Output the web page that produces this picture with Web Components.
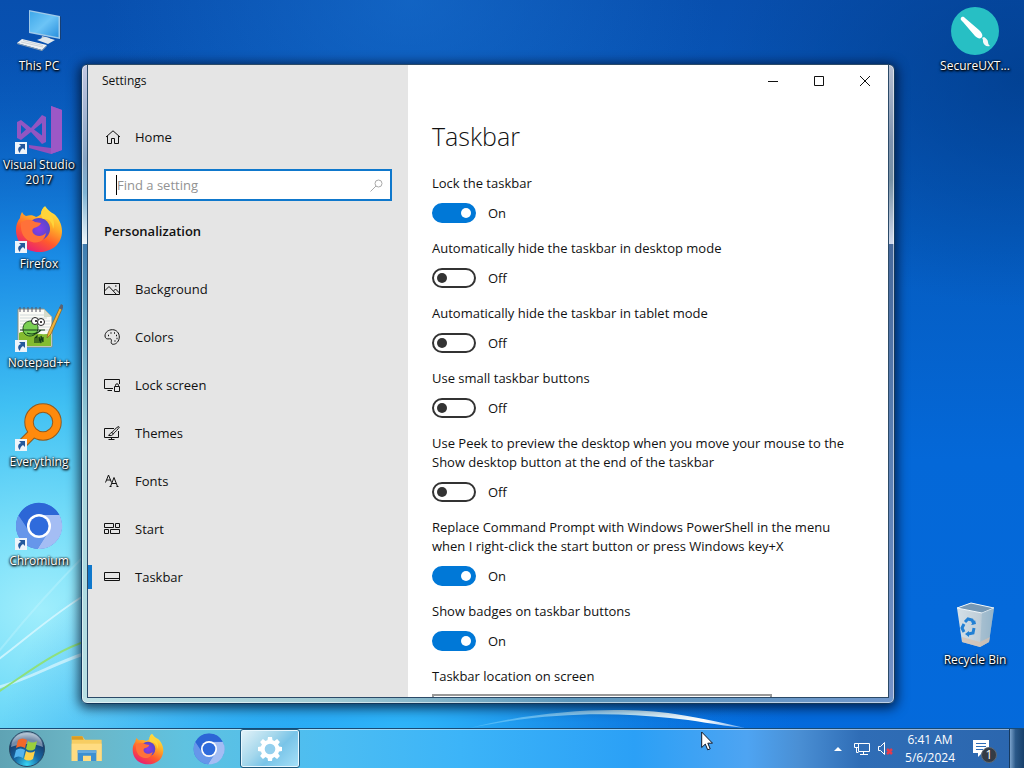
<!DOCTYPE html>
<html lang="en">
<head>
<meta charset="utf-8">
<meta name="viewport" content="width=device-width, initial-scale=1">
<title>Settings</title>
<style>
    html, body {
        height: 100%;
        margin: 0;
        overflow: hidden;
        font-family: "Open Sans", "Noto Sans", sans-serif;
        font-size: 13px;
        color: #111;
    }
</style>
</head>
<body>

<desktop-screen>
    <desktop-icon slot="left" icon="pc">This PC</desktop-icon>
    <desktop-icon slot="left" icon="vs" shortcut>Visual Studio 2017</desktop-icon>
    <desktop-icon slot="left" icon="firefox" shortcut>Firefox</desktop-icon>
    <desktop-icon slot="left" icon="notepad" shortcut>Notepad++</desktop-icon>
    <desktop-icon slot="left" icon="everything" shortcut>Everything</desktop-icon>
    <desktop-icon slot="left" icon="chromium" shortcut>Chromium</desktop-icon>

    <desktop-icon slot="right" icon="secure">SecureUXT...</desktop-icon>
    <desktop-icon slot="right" icon="bin" style="grid-row: 7">Recycle Bin</desktop-icon>

    <app-window heading="Settings">
        <settings-nav slot="side">
            <nav-item slot="home" icon="home">Home</nav-item>
            <nav-item icon="picture">Background</nav-item>
            <nav-item icon="palette">Colors</nav-item>
            <nav-item icon="lock">Lock screen</nav-item>
            <nav-item icon="themes">Themes</nav-item>
            <nav-item icon="fonts">Fonts</nav-item>
            <nav-item icon="start">Start</nav-item>
            <nav-item icon="taskbar" active>Taskbar</nav-item>
        </settings-nav>
        <settings-page heading="Taskbar">
            <toggle-setting label="Lock the taskbar" on></toggle-setting>
            <toggle-setting label="Automatically hide the taskbar in desktop mode"></toggle-setting>
            <toggle-setting label="Automatically hide the taskbar in tablet mode"></toggle-setting>
            <toggle-setting label="Use small taskbar buttons"></toggle-setting>
            <toggle-setting label="Use Peek to preview the desktop when you move your mouse to the Show desktop button at the end of the taskbar"></toggle-setting>
            <toggle-setting label="Replace Command Prompt with Windows PowerShell in the menu when I right-click the start button or press Windows key+X" on></toggle-setting>
            <toggle-setting label="Show badges on taskbar buttons" on></toggle-setting>
            <select-setting label="Taskbar location on screen"></select-setting>
        </settings-page>
    </app-window>

    <task-bar slot="bar">
        <task-button icon="explorer" name="File Explorer"></task-button>
        <task-button icon="firefox" name="Firefox"></task-button>
        <task-button icon="chromium" name="Chromium"></task-button>
        <task-button icon="gear" name="Settings" active></task-button>
    </task-bar>
</desktop-screen>

<script>
(function(){

// coloured icons are 48x48, line icons are 16x16
var icons = {
    pc: `<svg viewBox="0 0 48 48">
        <defs><linearGradient id="s" x1="0" y1="0" x2="1" y2="1"><stop offset="0" stop-color="#3fa8ea"/><stop offset=".5" stop-color="#6cc4f6"/><stop offset="1" stop-color="#2a90de"/></linearGradient></defs>
        <path d="M14 3l31 6v23l-31-6z" fill="#9fc9e8"/><path d="M45 9l1 1v22l-1 1z" fill="#173f74"/>
        <path d="M15 4.500l28.500 5.600v20.200L15 24.800z" fill="url(#s)"/>
        <path d="M27 29l8 2-1 4-8-2z" fill="#b8c6d2"/><path d="M22 33l8-3 10 3-7 4z" fill="#dfe7ec"/>
        <path d="M2 36l5-4 25 6-5 5z" fill="#eef1f3"/><path d="M2 36l25 7v1L2 37zM27 43l5-5v1l-5 5z" fill="#8da0b0"/>
        <path d="M6 35l22 5M8 33.500l20 5" stroke="#b5c0c8" fill="none" stroke-width=".6"/></svg>`,
    vs: `<svg viewBox="0 0 48 48"><path d="M36 0l11 4v40l-11 4-22-6v-3l22 3z" fill="#9250bc"/><path d="M36 0l11 4v40l-11 4z" fill="#9c58c6"/>
        <path fill-rule="evenodd" d="M2 16l4-2 10 8L27 9l4 2v25l-4 2-11-12-10 8-4-2zM6 19v9l5-4.500zM19 23.500l8 6V17z" fill="#9256c2"/></svg>`,
    firefox: `<svg viewBox="0 0 48 48">
        <defs><linearGradient id="f" x1=".8" y1="0" x2=".25" y2="1"><stop offset="0" stop-color="#fff04a"/><stop offset=".35" stop-color="#ffae28"/><stop offset=".65" stop-color="#ff5a2d"/><stop offset="1" stop-color="#e6187c"/></linearGradient>
        <radialGradient id="p"><stop offset="0" stop-color="#8b3bea"/><stop offset="1" stop-color="#5747c8"/></radialGradient></defs>
        <path d="M30 1c3 4 5 6 9 8 4 3 8 10 8 17 0 13-10 21-23 21S1 38 1 25c0-5 1-8 4-12 0-2 1-4 2-6 1 2 2 3 4 4 4-1 7-1 10 1 3-1 4-2 5-3 0-3 2-6 4-8z" fill="url(#f)"/>
        <circle cx="24" cy="24" r="11" fill="url(#p)"/>
        <path d="M6 18c4-4 10-4 14-1l6 1c-1 3-4 4-7 5-2 1-2 3-1 5 3 4 9 4 13 0-1 7-7 11-14 9C9 35 5 27 6 18z" fill="#ff7139"/>
        <path d="M28 14c6-1 10 4 10 10 2-5 1-11-3-15-4-2-6-5-6-7-3 3-4 8-1 12z" fill="#ffd43a"/></svg>`,
    notepad: `<svg viewBox="0 0 48 48">
        <path d="M3 5h26l8 8v30H3z" fill="#fbfbf6" stroke="#8a8f80"/><path d="M5 11h24M5 14h27M5 17h30M5 20h30M5 23h30M5 26h30" stroke="#b5c4ca" stroke-width=".6"/>
        <path d="M29 5v8h8z" fill="#d6dccc"/><path d="M5 3v5M9 3v5M13 3v5M17 3v5M21 3v5M25 3v5" stroke="#556" stroke-width="1"/>
        <path d="M4 29c8-4 20 4 32 0v13H4z" fill="#84bc30"/><path d="M8 25c0-5 3-8 8-8 4 0 7 3 7 7 0 5-4 8-8 8-4 0-7-3-7-7z" fill="#79cf52" stroke="#1c4a18"/>
        <circle cx="20" cy="17" r="3.500" fill="#fff" stroke="#222"/><circle cx="26" cy="18" r="3.500" fill="#fff" stroke="#222"/><circle cx="21" cy="17" r="1"/><circle cx="26" cy="18" r="1"/>
        <path d="M5 26h6M10 26h20M12 29q8 3 14-3M20 39v-5l2-2v7M24 39v-6l2 6v-7l2 6v-5" stroke="#163e16" fill="none" stroke-width="1.200"/>
        <path d="M33 29L45 3l2 2-11 25-4 4z" fill="#f0b23c" stroke="#86601c" stroke-width=".7"/><path d="M44 4l2-4 3 2-2 4z" fill="#5a6272"/></svg>`,
    everything: `<svg viewBox="0 0 48 48"><path d="M20 28L7 41" stroke="#8f5a20" stroke-width="10"/><circle cx="28" cy="19" r="14" fill="none" stroke="#8f5a20" stroke-width="9.500"/>
        <path d="M20 28L7 41" stroke="#ff8a0c" stroke-width="8"/><circle cx="28" cy="19" r="14" fill="none" stroke="#ff8a0c" stroke-width="7.500"/></svg>`,
    chromium: `<svg viewBox="0 0 48 48"><circle cx="24" cy="24" r="23" fill="#3b75de"/>
        <path d="M24 13h20.500a23 23 0 0 1-22 34l11-18z" fill="#a4bdf4"/><path d="M4 12.500a23 23 0 0 0 18.500 34.400L31 34l-17-4z" fill="#6696ea"/>
        <path d="M3.500 13.500A23 23 0 0 1 44.500 13H24l-9 17z" fill="#2c66d6"/><circle cx="24" cy="24" r="12" fill="#fff"/><circle cx="24" cy="24" r="9.500" fill="#2f6bdc"/></svg>`,
    secure: `<svg viewBox="0 0 48 48"><circle cx="24" cy="24" r="24" fill="#27bfc4"/>
        <path d="M10 11c1-2 3-1 4 0l14 12c3 3 4 5 3 7s-4 2-7-1L12 15c-2-2-3-3-2-4z" fill="#fff"/><path d="M31 31l2-1c2 1 4 3 4 5 0 2 1 3 2 4-4 1-6-1-7-4 0-2 0-3-1-4z" fill="#f3f8f8"/></svg>`,
    bin: `<svg viewBox="0 0 48 48">
        <defs><linearGradient id="b"><stop offset="0" stop-color="#d4e0e8"/><stop offset=".6" stop-color="#c0ced8"/><stop offset="1" stop-color="#8fb0c8"/></linearGradient></defs>
        <path d="M6 7l14-5 23 5-5 34-9 5-18-5z" fill="url(#b)"/><path d="M6 7l14-5 23 5-12 5z" fill="#7698b4" stroke="#eef5f9"/>
        <path d="M31 12l12-5-5 34-9 5z" fill="#9ab8cc" opacity=".6"/><path d="M11 36l18 5 10-5-1 5-9 5-18-5z" fill="#d9c0ae" opacity=".7"/>
        <path d="M14 21l3-3 4 1 2 4M23 27l-1 5-5 1M13 31l-2-4 2-4" fill="none" stroke="#2280d4" stroke-width="3"/><path d="M20 24l5-1-1-4zM18 36v-6l-4 3z" fill="#2280d4"/></svg>`,
    explorer: `<svg viewBox="0 0 48 48"><path d="M1 5h16l4 5h25v32H1z" fill="#f7cd62"/><path d="M1 5h16l2 5H1z" fill="#dc9c22"/><path d="M1 16h45v26H1z" fill="#ffdc82"/>
        <path d="M10 26h28v16h-8v-8H18v8h-8z" fill="#3c8fd2"/><path d="M10 26h28v4H10z" fill="#66abe0"/></svg>`,
    gear: `<svg viewBox="0 0 48 48"><g fill="#fff"><circle cx="24" cy="24" r="14"/>
        <path d="M21 6h6l1 6h-8zM21 42h6l1-6h-8z"/><path d="M6 21v6l6 1v-8zM42 21v6l-6 1v-8z"/>
        <g transform="rotate(45 24 24)"><path d="M21 6h6l1 6h-8zM21 42h6l1-6h-8z"/><path d="M6 21v6l6 1v-8zM42 21v6l-6 1v-8z"/></g></g>
        <circle cx="24" cy="24" r="8" fill="#94d0ee"/></svg>`,
    home: `<svg viewBox="0 0 16 16"><path d="M2 8L9 1.800 16 8M3.500 7v7.500h4v-5h3v5h4V7"/></svg>`,
    search: `<svg viewBox="0 0 16 16"><circle cx="9.500" cy="6.500" r="3.500"/><path d="M7 9l-5.500 5.500"/></svg>`,
    picture: `<svg viewBox="0 0 16 16"><path d="M.5 2.500h15v11H.5zM.5 10L5 5.500l7.500 8M9.500 10l2-2 4 4"/><path d="M11 5h1.500" /></svg>`,
    palette: `<svg viewBox="0 0 16 16"><path d="M1 7C1 3 4.500.7 8.500.7 12.500.7 15.300 4 15.300 8s-3 7.300-6 7.300c-2 0-2.300-1.300-2-2.800.4-2-.3-3-1.800-2.700C3 10.300 1 9.500 1 7z"/>
        <path d="M4 6.500h1M6.500 4h1M10 4h1M12 6.500h1M12.500 9.500h1M10.500 12h1" stroke-width="1.500"/></svg>`,
    lock: `<svg viewBox="0 0 16 16"><path d="M9 11.500H.5v-9h15V7M3.500 13.500H8"/><path d="M10.500 9.500h5v5h-5zM11.500 9.500V8.300a1.500 1.500 0 0 1 3 0v1.200"/></svg>`,
    themes: `<svg viewBox="0 0 16 16"><path d="M10 3.500H.5v9h14V6M4.500 14.500h6M7.500 12.500v2"/><path d="M14.500 1.500c-2 1-5 4-6.500 6l1.300 1.300c2-1.800 5-5 6-6.700zM8 7.500c-2 0-1.500 2-3.500 2.800 2 .8 4.500 0 4.800-1.500z"/></svg>`,
    fonts: `<svg viewBox="0 0 16 16"><path d="M1.500 9.500L4.500 2l3 7.500M2.500 7h4M6.500 13.500l3.500-9 3.500 9M7.800 10.500h4.500M5.500 13.500h2M12.500 13.500h2"/></svg>`,
    start: `<svg viewBox="0 0 16 16"><path d="M.5 2.500h9v4h-9zM11.500 2.500h4v4h-4zM.5 8.500h4v4h-4zM6.500 8.500h9v4h-9z"/></svg>`,
    taskbar: `<svg viewBox="0 0 16 16"><path d="M.5 3.500h15v8H.5zM.5 9.500h15"/></svg>`,
    min: `<svg viewBox="0 0 16 16"><path d="M3 8.500h10"/></svg>`,
    max: `<svg viewBox="0 0 16 16"><path d="M3.500 3.500h9v9h-9z"/></svg>`,
    close: `<svg viewBox="0 0 16 16"><path d="M3 3l10 10M13 3L3 13"/></svg>`,
    caret: `<svg viewBox="0 0 16 16"><path d="M4 10l4-4 4 4z" fill="currentColor" stroke="none"/></svg>`,
    network: `<svg viewBox="0 0 16 16"><path d="M4.500 2.500h11v8h-11zM9.500 10.500v3M6 13.500h8"/><path d="M.5 2.500h4v4h-4zM2.500 6.500v5h2"/></svg>`,
    volume: `<svg viewBox="0 0 16 16"><path d="M.5 5.500h2l4-4v12l-4-4h-2z"/><path d="M9 8l5 5M14 8l-5 5" stroke="#e33b4d" stroke-width="2.500"/></svg>`
};

function mount(el, html) {
    el.attachShadow({mode: 'open'});
    el.shadowRoot.innerHTML = html;
}

class DesktopScreen extends HTMLElement {
    constructor() {
        super();
        mount(this, /*html*/`
<style>
    :host {
        display: grid;
        grid-template-rows: 1fr auto;
        height: 100%;
        position: relative;
        overflow: hidden;
        background: #0660c8;
    }

    .wallpaper {
        position: absolute;
        inset: 0;
        width: 100%;
        height: 100%;
    }

    main {
        display: grid;
        grid-template-columns: 78px 1fr 98px;
        position: relative;
        min-height: 0;
    }

    .icons {
        display: grid;
        grid-template-rows: repeat(7, 99px);
    }

    .icons.right {
        grid-column: 3;
    }

    /* the window floats over the desktop */
    .windows {
        position: absolute;
        inset: 64px 129px 24px 81px;
    }

    .pointer {
        position: absolute;
        left: 701px;
        top: 731px;
        width: 12px;
        height: 20px;
    }
</style>

<svg class="wallpaper" viewBox="0 0 1024 768" preserveAspectRatio="none" aria-hidden="true">
    <defs>
        <linearGradient id="base" x1="0" y1="0" x2="0" y2="1">
            <stop offset="0" stop-color="#084fae"/><stop offset=".3" stop-color="#055cc0"/><stop offset=".6" stop-color="#0468d8"/><stop offset="1" stop-color="#046adc"/>
        </linearGradient>
        <radialGradient id="glow" gradientUnits="userSpaceOnUse" cx="0" cy="0" r="1" gradientTransform="translate(40 610) scale(700 570)">
            <stop offset="0" stop-color="#a0eefc"/><stop offset=".15" stop-color="#78def9"/><stop offset=".36" stop-color="#40c0f3"/><stop offset=".62" stop-color="#1c90e8" stop-opacity=".9"/><stop offset="1" stop-color="#0a5cc0" stop-opacity="0"/>
        </radialGradient>
        <radialGradient id="mid" gradientUnits="userSpaceOnUse" cx="0" cy="0" r="1" gradientTransform="translate(400 740) scale(400 260)">
            <stop offset="0" stop-color="#30b8fa"/><stop offset="1" stop-color="#0a80ee" stop-opacity="0"/>
        </radialGradient>
        <radialGradient id="dark" cx="1" cy=".1" r=".3"><stop offset="0" stop-color="#003a86" stop-opacity=".7"/><stop offset="1" stop-color="#003a86" stop-opacity="0"/></radialGradient>
        <radialGradient id="top" cx=".4" cy="0" r=".3"><stop offset="0" stop-color="#1c78d8" stop-opacity=".5"/><stop offset="1" stop-color="#1c78d8" stop-opacity="0"/></radialGradient>
        <linearGradient id="arc"><stop offset="0" stop-color="#8fdcff" stop-opacity=".3"/><stop offset=".6" stop-color="#c5ecff"/><stop offset=".85" stop-color="#fff"/><stop offset="1" stop-color="#fff" stop-opacity=".4"/></linearGradient>
    </defs>
    <rect width="1024" height="768" fill="url(#base)"/>
    <rect width="1024" height="768" fill="url(#glow)"/>
    <rect width="1024" height="768" fill="url(#mid)"/>
    <rect width="1024" height="768" fill="url(#dark)"/>
    <rect width="1024" height="768" fill="url(#top)"/>
    <path d="M470 728c70-18 150-22 205-14 30 5 50 9 70 14-30-3-50-8-75-10-60-6-120-6-200 10z" fill="url(#arc)"/>
    <g fill="none" stroke-linecap="round">
        <path d="M-5 662C25 640 55 612 90 592" stroke="#d9f8ff" stroke-width="2" opacity=".8"/>
        <path d="M-5 656C20 625 45 595 85 555" stroke="#c8f6ff" stroke-width="2" opacity=".35"/>
        <path d="M-5 688C30 680 55 662 90 652" stroke="#effcff" stroke-width="3" opacity=".6"/>
        <path d="M-5 694C25 675 55 650 90 640" stroke="#8ee07c" stroke-width="2"/>
    </g>
</svg>
<main>
    <div class="icons"><slot name="left"></slot></div>
    <div class="icons right"><slot name="right"></slot></div>
    <div class="windows"><slot></slot></div>
</main>
<slot name="bar"></slot>
<svg class="pointer" viewBox="0 0 12 20" aria-hidden="true"><path d="M.7 1v15.500l3.600-3.400 2.400 5.700 2.500-1-2.400-5.600h4.700z" fill="#fff" stroke="#101828"/></svg>
`);
    }
}

class DesktopIcon extends HTMLElement {
    constructor() {
        super();
        mount(this, /*html*/`
<style>
    :host {
        display: flex;
        flex-direction: column;
        align-items: center;
        gap: 3px;
        padding-top: 7px;
        color: #fff;
        font-size: 12px;
        line-height: 15px;
        text-align: center;
        text-shadow: 1px 1px 2px #000, 0 1px 3px #000, 0 0 2px #000;
    }

    .art {
        position: relative;
        display: grid;
        width: 48px;
        height: 48px;
    }

    .arrow {
        position: absolute;
        left: 0;
        bottom: 0;
        width: 12px;
        height: 12px;
        display: none;
    }

    :host([shortcut]) .arrow {
        display: block;
    }

    .label {
        max-width: 76px;
    }
</style>
<div class="art">${icons[this.getAttribute('icon')]}
<svg class="arrow" viewBox="0 0 12 12"><path d="M0 0h12v12H0z" fill="#eef4fa"/><path d="M4 2h6v6L8 6c-2 1-3 3-3 5-3-3-2-6 1-7z" fill="#24589c"/></svg></div>
<span class="label"><slot></slot></span>
`);
    }
}

class AppWindow extends HTMLElement {
    constructor() {
        super();
        mount(this, /*html*/`
<style>
    :host {
        display: grid;
        height: 100%;
        box-sizing: border-box;
        padding: 0 6px 6px;
        border: 1px solid #12385c;
        border-radius: 6px;
        background:
            linear-gradient(90deg, #bfe2e6, #a2ccd4 30%, #5d97bb 60%, #6f97cc) bottom / 100% 6px no-repeat,
            linear-gradient(#c2c8e2, #86a4c4 15%, #7fb4d4 20%, #eef6fa 28%, #3f7cb0 28%, #5b9fc0 40%, #a5d4dc 60%, #b9e0e4) left / 50% 100% no-repeat,
            linear-gradient(#b6bfd2, #7d92ae 12%, #7690a4 18%, #d0d9ec 28%, #46699c 28%, #5a80b4 60%, #7592c8) right / 50% 100% no-repeat;
        box-shadow: inset 0 0 0 1px rgba(255, 255, 255, .55), 0 2px 12px 2px rgba(0, 10, 30, .75);
    }

    .client {
        display: grid;
        grid-template-columns: 320px 1fr;
        min-height: 0;
        overflow: hidden;
        background: #fff;
        box-shadow: 0 0 0 1px #2b4a68;
    }

    .side, .content {
        display: grid;
        grid-template-rows: 31px 1fr;
        min-width: 0;
        min-height: 0;
        overflow: hidden;
    }

    .side {
        background: #e5e5e5;
    }

    .title {
        padding-left: 14px;
        font-size: 12px;
        line-height: 32px;
    }

    .caption {
        display: flex;
        justify-content: flex-end;
    }

    button {
        display: grid;
        place-items: center;
        width: 46px;
        padding: 0;
        border: 0;
        background: none;
    }

    svg {
        width: 16px;
        height: 16px;
        fill: none;
        stroke: #111;
    }
</style>
<section class="client">
    <div class="side">
        <div class="title">${this.getAttribute('heading')}</div>
        <slot name="side"></slot>
    </div>
    <div class="content">
        <div class="caption">
            <button aria-label="Minimize">${icons.min}</button>
            <button aria-label="Maximize">${icons.max}</button>
            <button aria-label="Close">${icons.close}</button>
        </div>
        <slot></slot>
    </div>
</section>
`);
    }
}

class SettingsNav extends HTMLElement {
    constructor() {
        super();
        mount(this, /*html*/`
<style>
    :host {
        display: block;
        padding-top: 17px;
    }

    .search {
        display: flex;
        align-items: center;
        box-sizing: border-box;
        height: 32px;
        margin: 8px 16px 0;
        padding: 0 5px 0 10px;
        border: 2px solid #0f78cc;
        background: #fff;
    }

    .caret {
        width: 1px;
        height: 20px;
        background: #000;
    }

    input {
        flex: 1;
        min-width: 0;
        padding: 0;
        border: 0;
        outline: 0;
        background: none;
        font: inherit;
    }

    input::placeholder {
        color: #929292;
    }

    .search svg {
        width: 16px;
        height: 16px;
        fill: none;
        stroke: #aaa;
    }

    h2 {
        margin: 20px 16px 24px;
        font-size: 13px;
        line-height: 20px;
        font-weight: 600;
    }
</style>
<nav>
    <slot name="home"></slot>
    <div class="search"><span class="caret"></span><input type="text" placeholder="Find a setting" aria-label="Find a setting">${icons.search}</div>
    <h2>Personalization</h2>
    <slot></slot>
</nav>
`);
    }
}

class NavItem extends HTMLElement {
    constructor() {
        super();
        mount(this, /*html*/`
<style>
    :host {
        display: block;
    }

    a {
        display: flex;
        align-items: center;
        gap: 15px;
        height: 48px;
        color: inherit;
        text-decoration: none;
    }

    /* accent bar in front of the current page */
    a::before {
        content: "";
        width: 4px;
        height: 24px;
        margin-right: -3px;
    }

    :host([active]) a::before {
        background: #0f78cc;
    }

    svg {
        width: 16px;
        height: 16px;
        fill: none;
        stroke: #111;
    }
</style>
<a href="#">${icons[this.getAttribute('icon')]}<slot></slot></a>
`);
    }
}

class SettingsPage extends HTMLElement {
    constructor() {
        super();
        mount(this, /*html*/`
<style>
    :host {
        display: flex;
        flex-direction: column;
        gap: 16px;
        min-height: 0;
        padding: 22px 24px 0;
        overflow: hidden;
    }

    h1 {
        margin: 0 0 3px;
        font-size: 25px;
        line-height: 37px;
        font-weight: 300;
    }
</style>
<h1>${this.getAttribute('heading')}</h1>
<slot></slot>
`);
    }
}

class ToggleSetting extends HTMLElement {
    constructor() {
        super();
        var on = this.hasAttribute('on');
        mount(this, /*html*/`
<style>
    :host {
        display: block;
        flex: none;
    }

    label {
        display: block;
        line-height: 19px;
    }

    .row {
        display: flex;
        align-items: center;
        gap: 12px;
        height: 20px;
        margin-top: 10px;
    }

    input {
        appearance: none;
        display: flex;
        align-items: center;
        box-sizing: border-box;
        width: 44px;
        height: 20px;
        margin: 0;
        padding: 0 3px;
        border: 2px solid #333;
        border-radius: 10px;
    }

    input::before {
        content: "";
        width: 10px;
        height: 10px;
        border-radius: 50%;
        background: #333;
    }

    input:checked {
        justify-content: flex-end;
        border-color: #0078d7;
        background: #0078d7;
    }

    input:checked::before {
        background: #fff;
    }
</style>
<label for="switch">${this.getAttribute('label')}</label>
<div class="row"><input type="checkbox" role="switch" id="switch"${on ? ' checked' : ''}><span>${on ? 'On' : 'Off'}</span></div>
`);
        var state = this.shadowRoot.querySelector('span');
        this.shadowRoot.querySelector('input').addEventListener('change', e => {
            state.textContent = e.target.checked ? 'On' : 'Off';
        })
    }
}

class SelectSetting extends HTMLElement {
    constructor() {
        super();
        mount(this, /*html*/`
<style>
    :host {
        display: block;
        flex: none;
    }

    label {
        display: block;
        line-height: 19px;
    }

    select {
        appearance: none;
        display: block;
        width: 340px;
        height: 32px;
        margin-top: 8px;
        border: 2px solid #999;
        background: #fff;
        font: inherit;
    }
</style>
<label for="choice">${this.getAttribute('label')}</label>
<select id="choice"></select>
`);
    }
}

class TaskBar extends HTMLElement {
    constructor() {
        super();
        mount(this, /*html*/`
<style>
    :host {
        display: flex;
        align-items: stretch;
        position: relative;
        box-sizing: border-box;
        height: 40px;
        border-top: 1px solid #174a76;
        box-shadow: inset 0 1px rgba(255, 255, 255, .5);
        background: linear-gradient(90deg, #5fa3b4, #6cb6c6 8%, #5fc2e0 18%, #4cbdf2 32%, #3cb4f8 45%, #2ba0f6 62%, #4ea4f2 73%, #4a8fd4 78%, #2f6db6 84%, #2b66ae);
        color: #fff;
    }

    button {
        display: grid;
        place-items: center;
        padding: 0;
        border: 0;
        background: none;
        color: inherit;
    }

    .start {
        width: 57px;
        padding-right: 3px;
    }

    .start svg {
        width: 38px;
        height: 38px;
    }

    .apps {
        display: flex;
        flex: 1;
        gap: 1px;
    }

    .tray {
        display: flex;
        align-items: center;
        gap: 8px;
    }

    .tray .small svg {
        display: block;
        width: 16px;
        height: 16px;
        fill: none;
        stroke: #fff;
    }

    .clock {
        margin: 0 8px 0 3px;
        font-size: 12px;
        line-height: 18px;
        text-align: center;
    }

    .notes svg {
        width: 26px;
        height: 28px;
    }

    .notes text {
        font: 12px "Open Sans", sans-serif;
        fill: #fff;
    }

    .peek {
        width: 15px;
        margin-left: 4px;
        border: 1px solid #16395f;
        border-width: 0 0 0 1px;
        background: linear-gradient(90deg, #7ba3cc, #2a5888 40%, #173f6a);
        align-self: stretch;
    }
</style>
<button class="start" aria-label="Start"><svg viewBox="0 0 38 38">
    <defs><radialGradient id="orb" cx=".5" cy=".95" r=".9"><stop offset="0" stop-color="#37d6f5"/><stop offset=".4" stop-color="#1769a5"/><stop offset=".8" stop-color="#173c6c"/><stop offset="1" stop-color="#8aa4bc"/></radialGradient></defs>
    <circle cx="19" cy="19" r="17.500" fill="url(#orb)" stroke="#274864"/>
    <path d="M3 17C4 7 11 3 19 3s15 4 16 14c-9-4-22-4-32 0z" fill="#fff" opacity=".4"/>
    <path d="M10 10c3-2 6-2 9 0l-2 8c-3-2-6-2-9 0z" fill="#f2682a"/><path d="M20 11c3 2 6 2 9 0l-2 8c-3 2-6 2-9 0z" fill="#9bcf3c"/>
    <path d="M8 20c3-2 6-2 9 0l-2 8c-3-2-6-2-9 0z" fill="#54b4ee"/><path d="M18 21c3 2 6 2 9 0l-2 8c-3 2-6 2-9 0z" fill="#fdd24a"/>
</svg></button>
<div class="apps"><slot></slot></div>
<div class="tray">
    <button class="small" aria-label="Show hidden icons">${icons.caret}</button>
    <button class="small" aria-label="Network">${icons.network}</button>
    <button class="small" aria-label="Volume">${icons.volume}</button>
    <div class="clock">6:41 AM<br>5/6/2024</div>
    <button class="notes" aria-label="Notifications"><svg viewBox="0 0 26 28">
        <path d="M2 5h16v13H11l-4 4v-4H2z" fill="#fff"/><path d="M5 8.500h10M5 11.500h10M5 14.500h7" stroke="#2f6db6"/>
        <circle cx="18" cy="20" r="7.500" fill="#353b44" stroke="#5e6974"/><text x="18" y="24" text-anchor="middle">1</text></svg></button>
    <button class="peek" aria-label="Show desktop"></button>
</div>
`);
    }
}

class TaskButton extends HTMLElement {
    constructor() {
        super();
        mount(this, /*html*/`
<style>
    :host {
        display: block;
        width: 60px;
    }

    button {
        display: grid;
        place-items: center;
        box-sizing: border-box;
        width: 100%;
        height: 100%;
        padding: 0;
        border: 1px solid transparent;
        border-radius: 3px;
        background: none;
    }

    :host([active]) button {
        border-color: #1d5a80;
        box-shadow: inset 0 0 0 1px #e8f8ff;
        background: linear-gradient(135deg, #e4f3f9, #a4d7ec 40%, #79c4e8 60%, #a6e0f8);
    }

    svg {
        width: 32px;
        height: 32px;
    }
</style>
<button aria-label="${this.getAttribute('name')}">${icons[this.getAttribute('icon')]}</button>
`);
    }
}

window.customElements.define('desktop-screen', DesktopScreen);
window.customElements.define('desktop-icon', DesktopIcon);
window.customElements.define('app-window', AppWindow);
window.customElements.define('settings-nav', SettingsNav);
window.customElements.define('nav-item', NavItem);
window.customElements.define('settings-page', SettingsPage);
window.customElements.define('toggle-setting', ToggleSetting);
window.customElements.define('select-setting', SelectSetting);
window.customElements.define('task-bar', TaskBar);
window.customElements.define('task-button', TaskButton);

})();
</script>
</body>
</html>
